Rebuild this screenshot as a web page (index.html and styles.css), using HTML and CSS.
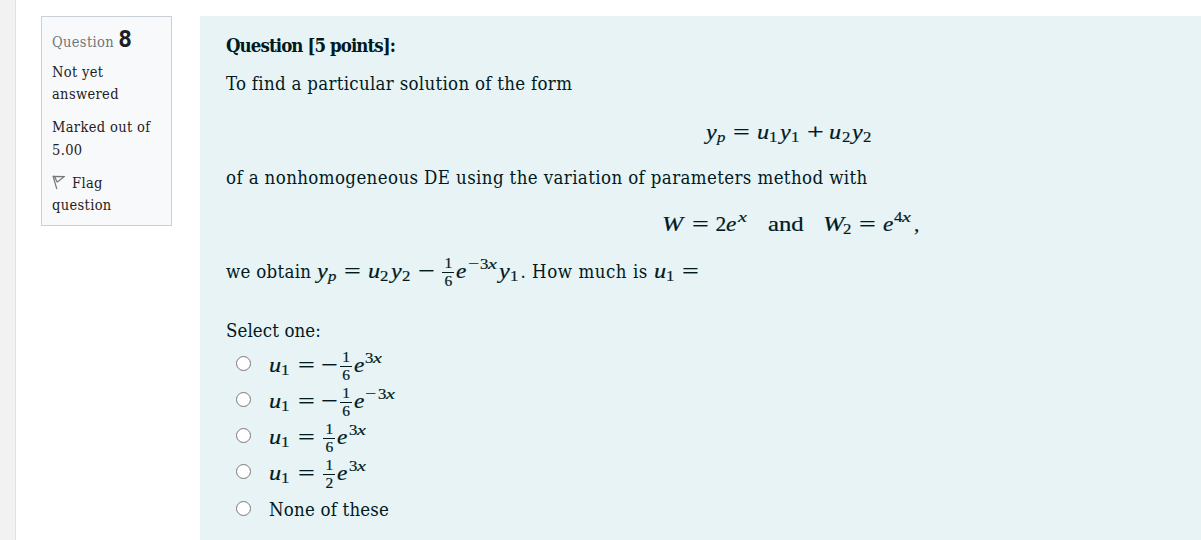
FILE: index.html
```html
<!DOCTYPE html>
<html lang="en">

<head>
  <meta charset="UTF-8">
  <title>Quiz</title>
  <link rel="stylesheet" href="styles.css">
</head>

<body>
  <div class="drawer"></div>

  <div class="info">
    <h3 class="no"><span class="label">Question</span> <span class="qno">8</span></h3>
    <div class="state">Not yet<br>answered</div>
    <div class="grade">Marked out of<br>5.00</div>
    <div class="flag">
      <svg class="flag-icon" width="13" height="15" viewBox="0 0 13 15" fill="none" stroke="#777">
        <path d="M1 .8L4.8 14M1 1.4L12.2 1.7L5 7.2M2.8 2L5 7" stroke-width="1.2" />
      </svg><span>Flag</span><br>question
    </div>
  </div>

  <div class="formulation">
    <h4 class="row title">Question [5 points]:</h4>
    <p class="row intro">To find a particular solution of the form</p>

    <p class="row display first"><span class="math"><i class="y">y</i><i class="sub p">p</i><b class="rel">=</b><i class="u">u</i><b class="sub">1</b><i class="y">y</i><b class="sub">1</b><b class="bin">+</b><i class="u">u</i><b class="sub">2</b><i class="y">y</i><b class="sub">2</b></span></p>

    <p class="row method">of a nonhomogeneous DE using the variation of parameters method with</p>

    <p class="row display second"><span class="math"><i class="w wide">W</i><b class="rel">=</b><b>2</b><i class="e">e</i><i class="sup x">x</i><b class="and">and</b><i class="w">W</i><b class="sub">2</b><b class="rel">=</b><i class="e">e</i><b class="sup">4</b><i class="sup x">x</i><b class="comma">,</b></span></p>

    <p class="row obtain"><span class="we">we obtain</span> <span class="math"><i class="y">y</i><i class="sub p">p</i><b class="rel">=</b><i class="u">u</i><b class="sub">2</b><i class="y">y</i><b class="sub">2</b><b class="bin">−</b><span class="frac"><b>1</b><b>6</b></span><i class="e">e</i><b class="sup minus">−</b><b class="sup">3</b><i class="sup x">x</i><i class="y">y</i><b class="sub">1</b></span><span class="how">. How much is</span> <span class="math"><i class="u">u</i><b class="sub">1</b><b class="rel">=</b></span></p>

    <div class="row prompt">Select one:</div>

    <div class="answers">
      <label class="row answer"><input type="radio" name="answer"><span class="math"><i class="u">u</i><b class="sub">1</b><b class="rel">=</b><b class="neg">−</b><span class="frac"><b>1</b><b>6</b></span><i class="e">e</i><b class="sup">3</b><i class="sup x">x</i></span></label>
      <label class="row answer"><input type="radio" name="answer"><span class="math"><i class="u">u</i><b class="sub">1</b><b class="rel">=</b><b class="neg">−</b><span class="frac"><b>1</b><b>6</b></span><i class="e">e</i><b class="sup minus">−</b><b class="sup">3</b><i class="sup x">x</i></span></label>
      <label class="row answer"><input type="radio" name="answer"><span class="math"><i class="u">u</i><b class="sub">1</b><b class="rel">=</b><span class="frac"><b>1</b><b>6</b></span><i class="e">e</i><b class="sup">3</b><i class="sup x">x</i></span></label>
      <label class="row answer"><input type="radio" name="answer"><span class="math"><i class="u">u</i><b class="sub">1</b><b class="rel">=</b><span class="frac"><b>1</b><b>2</b></span><i class="e">e</i><b class="sup">3</b><i class="sup x">x</i></span></label>
      <label class="row answer none"><input type="radio" name="answer"><span>None of these</span></label>
    </div>
  </div>
</body>

</html>
```
FILE: styles.css
```css
* {
  box-sizing: border-box;
}

body {
  margin: 0;
  height: 540px;
  display: flex;
  overflow: hidden;
  background: #fff;
  color: #1d2125;
  font-family: "Roboto Slab", "DejaVu Serif Condensed", "DejaVu Serif", serif;
  font-stretch: condensed;
}

h3, h4, p {
  margin: 0;
}

.drawer {
  width: 16px;
  background: #f2f2f2;
  border-right: 1px solid #dee2e6;
}

.info {
  width: 131px;
  height: 210px;
  margin: 16px 28px 0 25px;
  padding: 9px 10px;
  background: #f8f9fa;
  border: 1px solid #cad0d7;
  font-size: 14.5px;
  letter-spacing: 0.35px;
  line-height: 22px;
  white-space: nowrap;
}

.no {
  height: 35px;
  line-height: 28px;
  font-size: 14.5px;
  font-weight: normal;
}

.label {
  color: #70757a;
}

.qno {
  font-family: Roboto, sans-serif;
  font-size: 23px;
  font-stretch: normal;
  font-weight: bold;
}

.state, .grade {
  height: 44px;
  margin-bottom: 11px;
}

.grade {
  margin-bottom: 12px;
  line-height: 23px;
}

.flag-icon {
  margin-right: 7px;
  vertical-align: -2px;
}

.formulation {
  flex: 1;
  min-width: 0;
  margin-top: 16px;
  padding: 12px 0 0 26px;
  background: #e7f3f5;
  color: #001a1e;
}

.row {
  height: 36px;
  line-height: 36px;
  font-size: 18.5px;
  letter-spacing: 0.3px;
  white-space: nowrap;
}

.title {
  font-weight: bold;
  letter-spacing: -0.9px;
}

.intro {
  margin-top: 2px;
}

/* formulas are centered on x = 790 */
.display {
  padding-left: 154px;
  text-align: center;
}

.display .math {
  display: inline-block;
  height: 36px;
}

.first {
  margin-top: 12px;
}

.first .math {
  margin-right: 1px;
}

.method {
  margin-top: 10px;
  letter-spacing: 0.39px;
}

.second,
.obtain {
  margin-top: 11px;
  line-height: 34px;
}

.how {
  letter-spacing: 0.55px;
}

.prompt {
  margin-top: 23px;
  letter-spacing: 0.1px;
}

.answers {
  margin: -2px 0 0 10px;
}

.answer {
  display: flex;
}

.answer input {
  width: 15px;
  height: 15px;
  margin: 9px 18px 0 0;
}

.none {
  margin-top: 1px;
  letter-spacing: 0.2px;
}

/* formulas: every glyph gets its own advance width */
.math {
  font-family: "Liberation Serif", serif;
  font-size: 21.5px;
  letter-spacing: 0;
  -webkit-text-stroke: 0.2px #001a1e;
}

.math b, .math i {
  display: inline-block;
  font-weight: normal;
  line-height: 0;
  text-align: left;
  transform-origin: left;
}

.math .y {
  width: 0.51em;
  transform: scaleX(1.12);
}

.math .u {
  width: 0.575em;
  transform: scaleX(1.13);
}

.math .e {
  width: 0.53em;
  transform: scaleX(1.08);
}

.math .w {
  width: 0.93em;
  transform: scaleX(1.18);
}

.math .wide {
  width: 1.14em;
}

.math .rel, .math .bin, .math .neg {
  width: 0.78em;
  margin: 0 0.32em 0 0.26em;
  transform: scaleX(1.38);
}

.math .bin {
  margin: 0 0.26em;
}

.math .neg {
  margin: 0;
}

.math .sub, .math .sup {
  font-size: 15.5px;
  width: 0.52em;
  transform: scaleX(1.08);
}

.math .sub {
  width: 0.69em;
  vertical-align: -3px;
}

.math .sup {
  vertical-align: 9px;
}

.math .x {
  width: 0.68em;
  transform: scaleX(1.3);
}

.math .minus {
  width: 0.8em;
  transform: scaleX(1.3);
  -webkit-text-stroke: 0;
}

.math .and {
  margin: 0 24px 0 20px;
  transform: scaleX(1.15);
}

.math .comma {
  margin-left: 1px;
}

.frac {
  display: inline-flex;
  flex-direction: column;
  width: 12px;
  height: 33px;
  margin: 0 2px;
  vertical-align: 10px;
  font-size: 15.5px;
}

.math .frac b {
  height: 16px;
  line-height: 13px;
  text-align: center;
}

.math .frac b + b {
  height: 17px;
  line-height: 15px;
  border-top: 1px solid #001a1e;
}
```
